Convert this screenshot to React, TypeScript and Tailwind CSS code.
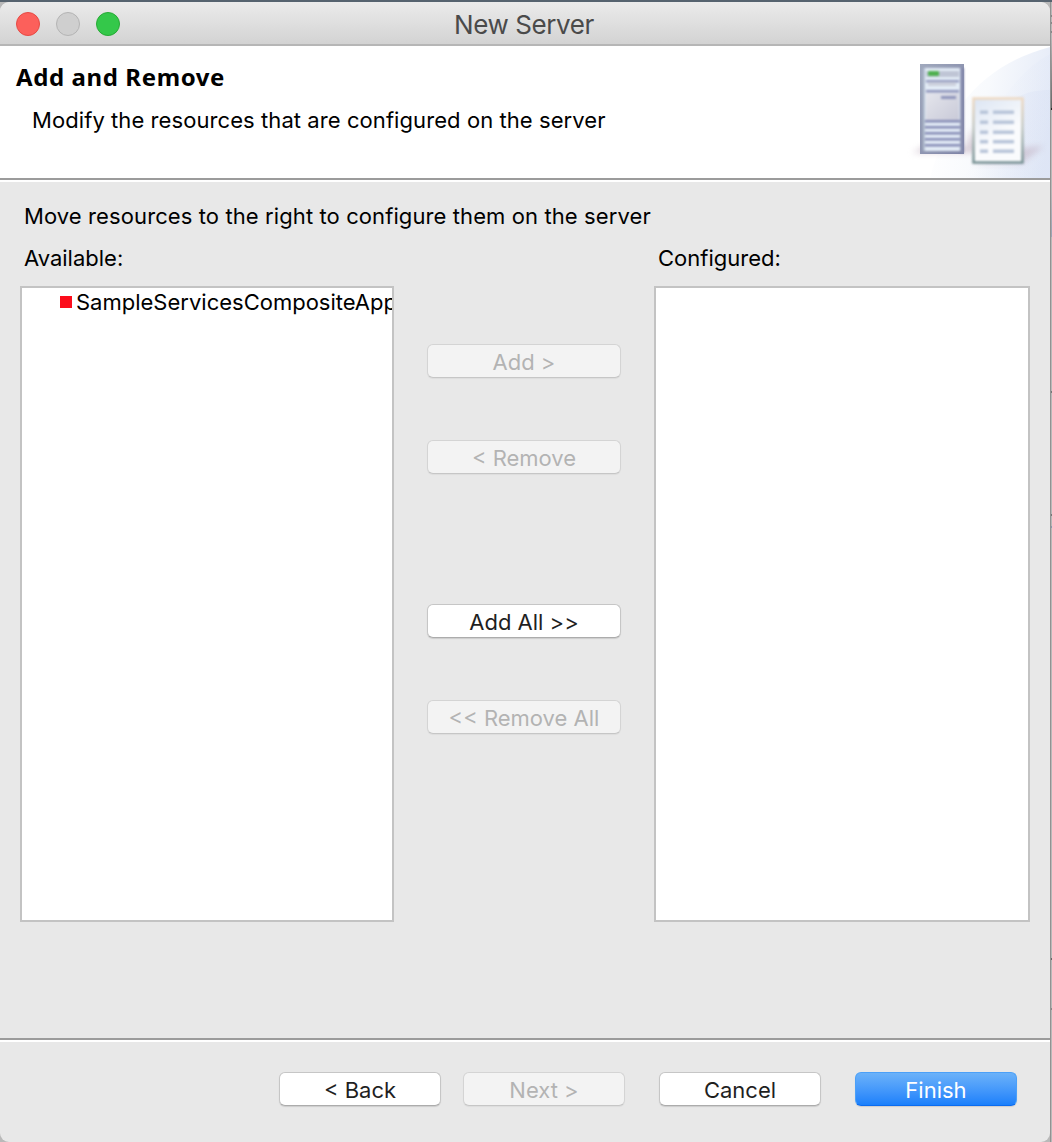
import React from "react";

type ButtonKind = "normal" | "disabled" | "primary";

const buttonStyles: Record<ButtonKind, string> = {
  normal:
    "bg-white border-[#c6c6c6] border-b-[#acacac] text-[#1f1f1f] shadow-[0_1px_1px_rgba(0,0,0,0.12)]",
  disabled:
    "bg-[#f3f3f3] border-[#d4d4d4] border-b-[#c6c6c6] text-[#b3b3b3] shadow-[0_1px_1px_rgba(0,0,0,0.05)]",
  primary:
    "bg-linear-to-b from-[#6db3f9] to-[#157efb] border-[#4ba0f8] border-b-[#0a6bf0] text-white shadow-[0_1px_1px_rgba(0,0,0,0.12)]",
};

function PushButton({
  label,
  kind = "normal",
  className,
}: {
  label: string;
  kind?: ButtonKind;
  className: string;
}) {
  return (
    <button
      disabled={kind === "disabled"}
      className={`flex h-[34px] shrink-0 items-center justify-center rounded-[6px] border bg-origin-border pt-px text-[22px] leading-7 whitespace-pre ${buttonStyles[kind]} ${className}`}
    >
      <span>{label}</span>
    </button>
  );
}

function Separator() {
  return <div className="h-1 shrink-0 border-t-2 border-[#9b9b9b] bg-white" />;
}

function ServerBanner() {
  return (
    <svg width="146" height="132" viewBox="0 0 146 132" className="shrink-0">
      <defs>
        <linearGradient id="sky" gradientUnits="userSpaceOnUse" x1="25" y1="60" x2="146" y2="80">
          <stop offset="0" stopColor="#fff" />
          <stop offset="0.45" stopColor="#f8fafd" />
          <stop offset="1" stopColor="#e4eaf7" />
        </linearGradient>
        <linearGradient id="sky2" x1="0" y1="0" x2="1" y2="0">
          <stop offset="0" stopColor="#d7e0f4" stopOpacity="0" />
          <stop offset="1" stopColor="#d7e0f4" stopOpacity="0.8" />
        </linearGradient>
        <linearGradient id="tower" x1="0" y1="0" x2="1" y2="1">
          <stop offset="0" stopColor="#a0a9bd" />
          <stop offset="1" stopColor="#7d82a5" />
        </linearGradient>
        <linearGradient id="face" x1="0" y1="0" x2="1" y2="1">
          <stop offset="0" stopColor="#e4e5ec" />
          <stop offset="1" stopColor="#c9cad8" />
        </linearGradient>
        <linearGradient id="frame" x1="0" y1="0" x2="0" y2="1">
          <stop offset="0" stopColor="#eed9c2" />
          <stop offset="0.45" stopColor="#c2c7c2" />
          <stop offset="1" stopColor="#748f92" />
        </linearGradient>
        <linearGradient id="paper" x1="0" y1="0" x2="0.5" y2="1">
          <stop offset="0" stopColor="#dce5f3" />
          <stop offset="0.7" stopColor="#fafbfd" />
        </linearGradient>
        <filter id="soft" x="-30%" y="-30%" width="160%" height="160%" colorInterpolationFilters="sRGB">
          <feGaussianBlur stdDeviation="3" />
        </filter>
        <filter id="fine" x="-10%" y="-10%" width="120%" height="120%" colorInterpolationFilters="sRGB">
          <feGaussianBlur stdDeviation="0.9" />
        </filter>
      </defs>
      <path d="M146 1C105 12 78 32 58 58C44 80 32 108 26 132H146Z" fill="url(#sky)" />
      <path d="M146 8C124 20 105 40 92 66V132H146Z" fill="url(#sky2)" opacity="0.2" />
      <path d="M146 44C128 44 115 48 100 60L60 132H146Z" fill="url(#sky2)" opacity="0.45" />
      <path d="M8 107L24 98L62 101L68 82L74 107Z" fill="#b9a3b5" opacity="0.5" filter="url(#soft)" />
      <path d="M68 117L118 117L140 100L118 102Z" fill="#b9a3b5" opacity="0.45" filter="url(#soft)" />
      <rect x="16" y="18" width="44" height="90" fill="url(#tower)" />
      <g filter="url(#fine)">
        <rect x="19" y="22" width="38" height="83" fill="#b3bfd0" />
        <rect x="21" y="22" width="35" height="83" fill="#e4edf7" />
        <rect x="22" y="25" width="33" height="6" fill="#bfc5d5" />
        <rect x="24" y="25" width="11" height="5" rx="1" fill="#4fb04f" />
        <rect x="22" y="34" width="33" height="2.5" fill="#939abf" />
        <rect x="24" y="36" width="28" height="4" fill="#ccd0dc" />
        <rect x="22" y="44" width="33" height="2.5" fill="#8d93ba" />
        <rect x="22" y="47" width="33" height="27" fill="url(#face)" />
        <rect x="37" y="50" width="15" height="3" fill="#8f95bb" />
        {[74, 80, 86, 92, 98].map((y) => (
          <rect key={y} x="21" y={y} width="35" height="2.5" fill="#8389b4" />
        ))}
        <rect x="56.5" y="22" width="3.5" height="85" fill="#8388ab" />
      </g>
      <g filter="url(#fine)">
        <rect x="69.5" y="52.5" width="49" height="64" fill="url(#paper)" stroke="url(#frame)" strokeWidth="2.5" />
        {[66, 76, 86, 95.5, 105].map((y) => (
          <g key={y} fill="#b6c3d8">
            <rect x="76" y={y - 1.5} width="8" height="3.4" />
            <rect x="89" y={y - 1.5} width="21" height="3.4" />
          </g>
        ))}
      </g>
    </svg>
  );
}

function TitleBar() {
  return (
    <div className="relative flex h-11 shrink-0 items-center justify-center rounded-t-[9px] border-b-2 border-[#b6b6b6] bg-linear-to-b from-[#ebebeb] to-[#d3d3d3]">
      <div className="absolute left-4 top-[10px] flex gap-4">
        <i className="size-6 rounded-full border border-[#e64a44] bg-[#fc605b]" />
        <i className="size-6 rounded-full border border-[#b4b4b4] bg-[#cfcfcf]" />
        <i className="size-6 rounded-full border border-[#27aa35] bg-[#34c84a]" />
      </div>
      <h1 className="pr-[2px] pt-[3px] text-[26px] leading-8 tracking-[-0.4px] text-[#4a4a4a]">
        <span>New Server</span>
      </h1>
    </div>
  );
}

export default function App() {
  return (
    <div className="flex h-[1142px] w-[1052px] overflow-hidden border-t-2 border-[#56636f] bg-[#b9b9b9] font-['Inter','Liberation_Sans',sans-serif] text-[22px] leading-7 text-black">
      <main className="flex w-[1050px] shrink-0 flex-col overflow-hidden rounded-[9px] bg-[#e8e8e8]">
        <TitleBar />
        <header className="flex h-[132px] shrink-0 justify-between bg-white">
          <div className="pl-4 pt-[15px]">
            <h2 className="font-['Noto_Sans',sans-serif] text-[24px] font-bold leading-8 tracking-[0.6px]">
              <span>Add and Remove</span>
            </h2>
            <p className="pl-4 pt-[13px] tracking-[0.075px] whitespace-nowrap">
              <span>Modify the resources that are configured on the server</span>
            </p>
          </div>
          <ServerBanner />
        </header>
        <Separator />
        <section className="flex h-[856px] shrink-0 flex-col px-5 pt-5">
          <p className="pl-1 tracking-[0.1px]">
            <span>Move resources to the right to configure them on the server</span>
          </p>
          <div className="flex pt-[14px]">
            <div className="w-[374px]">
              <p className="pl-1"><span>Available:</span></p>
              <div className="mt-[14px] h-[636px] overflow-hidden border-2 border-[#c3c3c3] bg-white">
                <div className="flex items-center pl-[38px] whitespace-nowrap">
                  <i className="mr-1 size-3 shrink-0 bg-[#fc0d1b]" />
                  <span>SampleServicesCompositeApp</span>
                </div>
              </div>
            </div>
            <div className="flex w-[260px] flex-col items-center pt-[100px]">
              <PushButton className="w-[194px]" kind="disabled" label="Add >" />
              <PushButton className="mt-[62px] w-[194px]" kind="disabled" label="< Remove" />
              <PushButton className="mt-[130px] w-[194px]" label="Add All >>" />
              <PushButton className="mt-[62px] w-[194px]" kind="disabled" label="<< Remove All" />
            </div>
            <div className="w-[376px]">
              <p className="pl-1"><span>Configured:</span></p>
              <div className="mt-[14px] h-[636px] border-2 border-[#c3c3c3] bg-white" />
            </div>
          </div>
        </section>
        <Separator />
        <footer className="flex flex-1 justify-end pr-[33px] pt-[30px]">
          <PushButton className="mr-[22px] w-[162px]" label="< Back" />
          <PushButton className="mr-[34px] w-[162px]" kind="disabled" label="Next >" />
          <PushButton className="mr-[34px] w-[162px]" label="Cancel" />
          <PushButton className="w-[162px]" kind="primary" label="Finish" />
        </footer>
      </main>
      <aside className="flex w-[2px] flex-col border-l border-[#929292] bg-[#b9b9b9]">
        <i className="mt-[13px] h-[2px] bg-[#888]" />
        <i className="mt-[5px] h-[2px] bg-[#888]" />
        <i className="mt-[7px] h-[2px] bg-[#888]" />
        <i className="mt-[4px] h-[71px] bg-linear-to-b from-[#b9b9b9] to-[#666]" />
        <i className="h-[2px] bg-[#222]" />
        <i className="mt-[81px] h-[46px] bg-linear-to-b from-[#b9b9b9] to-[#9aa3b4]" />
        <i className="mt-[154px] h-[2px] bg-[#777]" />
        <i className="mt-[121px] h-[2px] bg-[#777]" />
        <i className="mt-[10px] h-[2px] bg-[#8d99ad]" />
        <i className="mt-[430px] h-[2px] bg-[#666]" />
        <i className="mt-[48px] h-[2px] bg-[#888]" />
      </aside>
    </div>
  );
}
